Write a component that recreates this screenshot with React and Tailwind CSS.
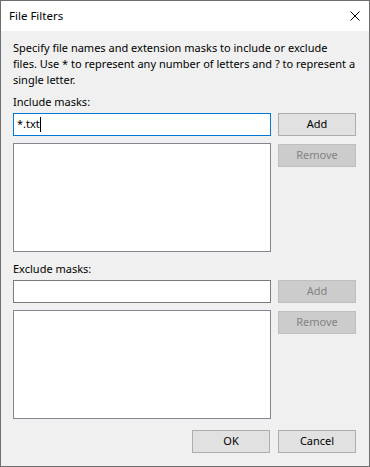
import React from 'react';

const font = { fontFamily: '"Noto Sans", "Open Sans", sans-serif' };

const Button = ({ label, disabled }) => (
  <div
    className={`w-[78px] h-[23px] flex items-center justify-center border text-[11px] ${
      disabled ? 'bg-[#cccccc] border-[#bfbfbf] text-[#838383]' : 'bg-[#e1e1e1] border-[#adadad] text-black'
    }`}
  >
    {label}
  </div>
);

const MaskGroup = ({ label, value, focused, addDisabled }) => (
  <div className="flex flex-col">
    <div className="h-[16px] leading-[16px] text-[11px] text-black">{label}</div>
    <div className="flex gap-[7px] mt-[3px]">
      <div
        className={`w-[258px] h-[23px] bg-white border flex items-center pl-[3px] text-[11px] text-black ${
          focused ? 'border-[#0078d7]' : 'border-[#7a7a7a]'
        }`}
      >
        {value}
        {focused && <span className="inline-block w-px h-[15px] bg-black" />}
      </div>
      <Button label="Add" disabled={addDisabled} />
    </div>
    <div className="flex gap-[7px] mt-[7px]">
      <div className="w-[258px] h-[109px] bg-white border border-[#828790]" />
      <div className="pt-px">
        <Button label="Remove" disabled />
      </div>
    </div>
  </div>
);

export default function App() {
  return (
    <div className="w-[370px] h-[467px] border border-[#6e6e6e] flex flex-col bg-[#f0f0f0]" style={font}>
      {/* Title bar */}
      <div className="h-[30px] bg-white flex items-center justify-between pl-2 pr-[9px]">
        <span className="text-[11.5px] text-black">File Filters</span>
        <svg width="10" height="10" viewBox="0 0 10 10" className="mb-px">
          <path d="M0.5 0.5 L9.5 9.5 M9.5 0.5 L0.5 9.5" stroke="#000" strokeWidth="1" />
        </svg>
      </div>

      {/* Body */}
      <div className="flex-1 flex flex-col px-3 pt-[9px]">
        <p className="text-[11px] leading-[16px] text-black whitespace-nowrap">
          Specify file names and extension masks to include or exclude
          <br />
          files. Use * to represent any number of letters and ? to represent a
          <br />
          single letter.
        </p>
        <div className="mt-[6px]">
          <MaskGroup label="Include masks:" value="*.txt" focused />
        </div>
        <div className="mt-[9px]">
          <MaskGroup label="Exclude masks:" value="" addDisabled />
        </div>
        <div className="flex justify-end gap-2 mt-[11px] pr-px">
          <Button label="OK" />
          <Button label="Cancel" />
        </div>
      </div>
    </div>
  );
}
